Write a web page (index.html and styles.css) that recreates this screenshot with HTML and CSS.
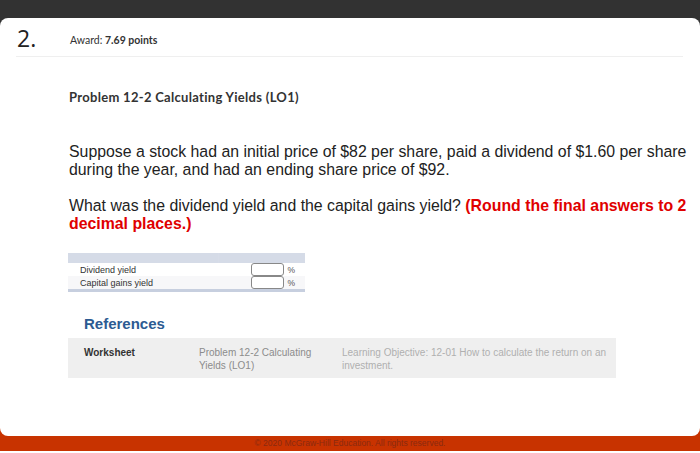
FILE: index.html
```html
<!DOCTYPE html>
<html>
<head>
<meta charset="utf-8">
<link rel="stylesheet" href="styles.css">
</head>
<body>
<div class="topbar"></div>
<div class="frame">
  <div class="card">
    <div class="qhead">
      <div class="qnum">2.</div>
      <div class="award">Award: <b>7.69 points</b></div>
    </div>
    <div class="content">
      <h2 class="title">Problem 12-2 Calculating Yields (LO1)</h2>
      <p class="text">Suppose a stock had an initial price of $82 per share, paid a dividend of $1.60 per share during the year, and had an ending share price of $92.</p>
      <p class="text">What was the dividend yield and the capital gains yield? <span class="red">(Round the final answers to 2 decimal places.)</span></p>
      <div class="answers">
        <div class="ahead"><span></span><span></span></div>
        <div class="arow">
          <span class="alabel">Dividend yield</span>
          <span class="acell"><span class="box"></span><span class="pct">%</span></span>
        </div>
        <div class="arow alt">
          <span class="alabel">Capital gains yield</span>
          <span class="acell"><span class="box"></span><span class="pct">%</span></span>
        </div>
      </div>
      <h3 class="refs">References</h3>
      <div class="refbox">
        <div class="rcol r1">Worksheet</div>
        <div class="rcol r2">Problem 12-2 Calculating Yields (LO1)</div>
        <div class="rcol r3">Learning Objective: 12-01 How to calculate the return on an investment.</div>
      </div>
    </div>
  </div>
</div>
<div class="footer">© 2020 McGraw-Hill Education. All rights reserved.</div>
</body>
</html>
```

FILE: styles.css
```css
html, body {
  margin: 0;
  padding: 0;
  background: #ffffff;
  width: 700px;
  height: 453px;
  overflow: hidden;
}
.topbar {
  height: 18px;
  background: #323232;
}
.frame {
  background: linear-gradient(#323232 0 50%, #c83300 50% 100%);
}
.card {
  background: #ffffff;
  border-radius: 8px;
  height: 418px;
  box-sizing: border-box;
}
.qhead {
  display: flex;
  align-items: center;
  height: 39px;
  margin: 0 17px 0 16px;
  border-bottom: 1px solid #efefef;
  box-sizing: border-box;
  padding-top: 2px;
}
.qnum {
  width: 53px;
  font-family: "Open Sans", sans-serif;
  font-weight: 400;
  font-size: 23px;
  color: #222;
  padding-left: 1px;
}
.award {
  font-family: Lato, sans-serif;
  font-size: 10.5px;
  color: #333;
  padding-top: 4px;
}
.award b {
  font-weight: 700;
}
.content {
  padding-left: 69px;
}
.title {
  margin: 32px 0 0;
  font-family: Lato, sans-serif;
  font-weight: 700;
  font-size: 13px;
  letter-spacing: 0.3px;
  color: #333;
  line-height: 16px;
}
.text {
  font-family: "Liberation Sans", Arial, sans-serif;
  font-size: 15.85px;
  line-height: 18px;
  color: #222;
  margin: 38px 0 0;
}
.text + .text {
  margin-top: 18px;
}
.red {
  color: #e00000;
  font-weight: 700;
}
.answers {
  width: 237px;
  margin: 20px 0 0 -1px;
  font-family: "Liberation Sans", Arial, sans-serif;
  font-size: 9px;
  color: #333;
  border-bottom: 3px solid #c7cfdf;
}
.ahead {
  display: grid;
  grid-template-columns: 150px 1fr;
  gap: 1px;
  height: 10px;
  background: #d7dce8;
}
.ahead span {
  background: #d5dbe7;
}
.arow {
  display: flex;
  align-items: center;
  height: 13px;
  background: #ffffff;
}
.arow.alt {
  background: #f7f7f9;
}
.alabel {
  flex: 1;
  padding-left: 12px;
}
.acell {
  display: flex;
  align-items: center;
  padding-right: 10px;
}
.box {
  width: 31px;
  height: 11px;
  border: 1px solid #888;
  border-radius: 3px;
  background: #fff;
}
.pct {
  margin-left: 3px;
  font-size: 8.5px;
  color: #555;
}
.refs {
  margin: 23px 0 0 15px;
  font-family: "Liberation Sans", Arial, sans-serif;
  font-weight: 700;
  font-size: 15px;
  line-height: 18px;
  color: #2c5b92;
}
.refbox {
  display: flex;
  width: 548px;
  height: 40px;
  margin: 5px 0 0 -1px;
  background: #efefef;
  box-sizing: border-box;
  padding: 8px 0 0 16px;
  font-family: "Liberation Sans", Arial, sans-serif;
  font-size: 10px;
  line-height: 13px;
}
.r1 {
  width: 115px;
  font-weight: 700;
  color: #333;
}
.r2 {
  width: 143px;
  color: #8c8c8c;
  padding-right: 18px;
  box-sizing: border-box;
}
.r3 {
  width: 274px;
  color: #b0b0b0;
}
.footer {
  height: 15px;
  background: #c83300;
  color: #8a2a10;
  font-family: "Liberation Sans", Arial, sans-serif;
  font-size: 8.5px;
  line-height: 15px;
  text-align: center;
}
```
